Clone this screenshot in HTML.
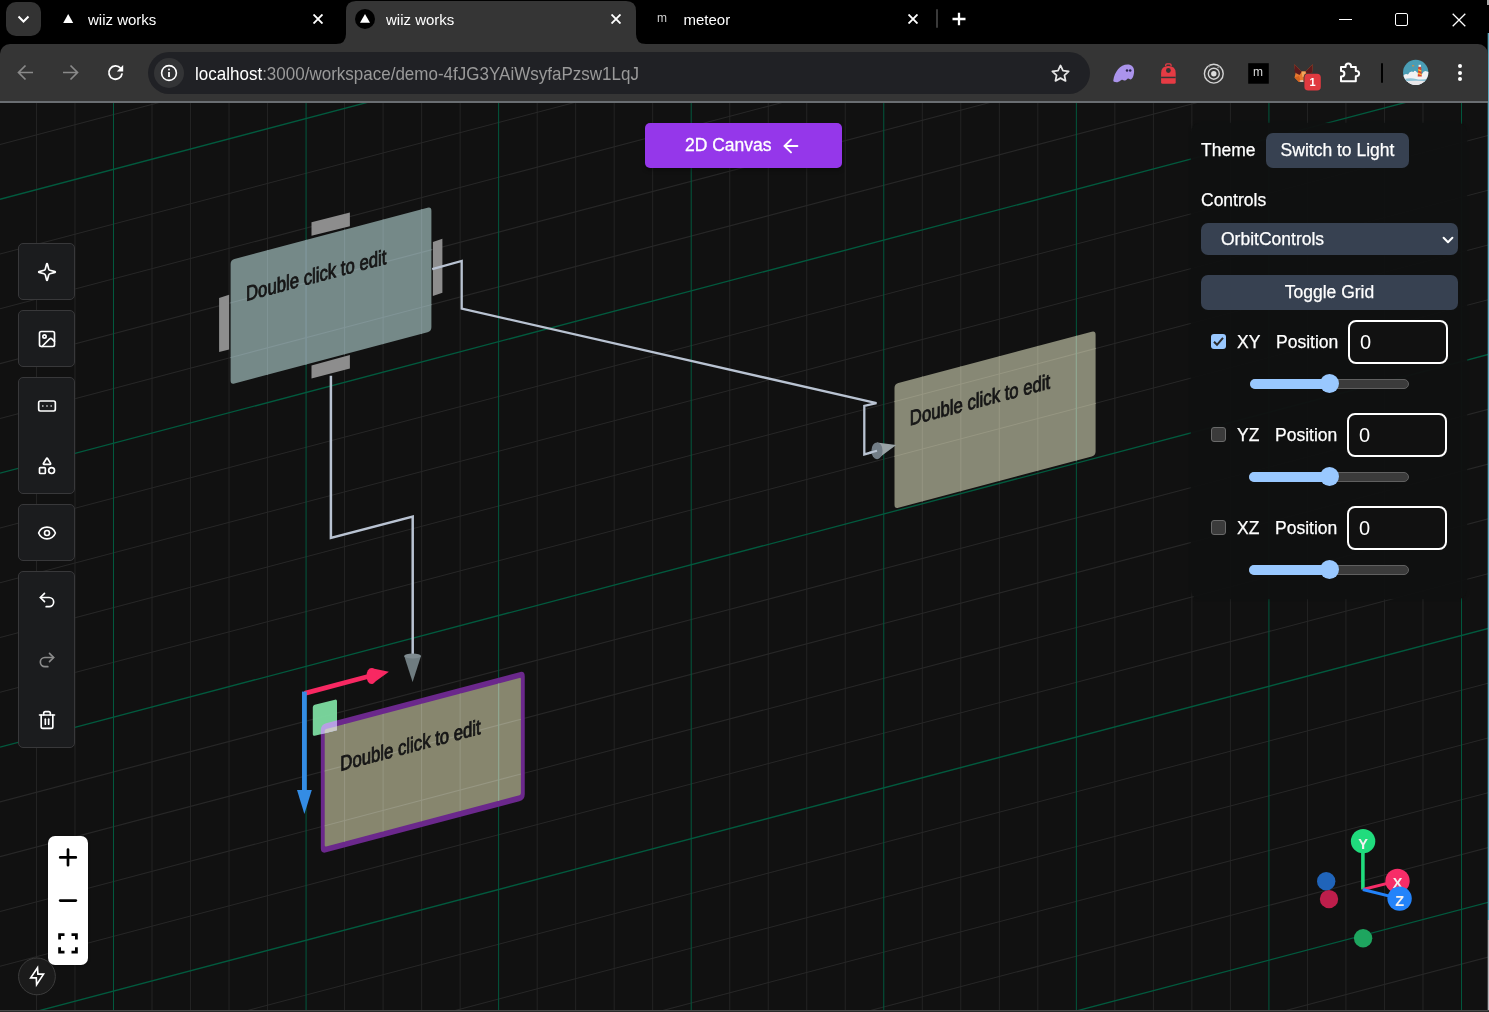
<!DOCTYPE html>
<html lang="en"><head><meta charset="utf-8"><title>wiiz works</title>
<style>
html,body{margin:0;padding:0}
body{width:1489px;height:1012px;background:#000;overflow:hidden;position:relative;font-family:"Liberation Sans",sans-serif}
#cv{position:absolute;left:0;top:103px;width:1488px;height:907px;background:#111;overflow:hidden;will-change:transform}
#ui{position:absolute;left:0;top:0;width:1489px;height:1012px;will-change:transform}
</style></head><body>
<div id="cv"><svg style="position:absolute;left:0;top:-103px" width="1489" height="1012" viewBox="0 0 1489 1012">
<path d="M36.47 103V1010M74.99 103V1010M152.01 103V1010M190.53 103V1010M229.04 103V1010M267.56 103V1010M344.58 103V1010M383.10 103V1010M421.61 103V1010M460.13 103V1010M537.15 103V1010M575.67 103V1010M614.18 103V1010M652.70 103V1010M729.72 103V1010M768.24 103V1010M806.75 103V1010M845.27 103V1010M922.29 103V1010M960.81 103V1010M999.32 103V1010M1037.84 103V1010M1114.86 103V1010M1153.38 103V1010M1191.89 103V1010M1230.41 103V1010M1307.43 103V1010M1345.95 103V1010M1384.46 103V1010M1422.98 103V1010" stroke="#242424" stroke-width="1" fill="none"/>
<path d="M0 144.52L1489 -248.28M0 254.08L1489 -138.72M0 308.86L1489 -83.94M0 363.64L1489 -29.16M0 418.42L1489 25.62M0 527.98L1489 135.18M0 582.76L1489 189.96M0 637.54L1489 244.74M0 692.32L1489 299.52M0 801.88L1489 409.08M0 856.66L1489 463.86M0 911.44L1489 518.64M0 966.22L1489 573.42M0 1075.78L1489 682.98M0 1130.56L1489 737.76M0 1185.34L1489 792.54M0 1240.12L1489 847.32M0 1349.68L1489 956.88M0 1404.46L1489 1011.66" stroke="#272727" stroke-width="1.050" fill="none"/>
<path d="M113.50 103V1010M306.07 103V1010M498.64 103V1010M691.21 103V1010M883.78 103V1010M1076.35 103V1010M1268.92 103V1010M1461.49 103V1010" stroke="#02593e" stroke-width="1" fill="none"/>
<path d="M0 199.30L1489 -193.50M0 473.20L1489 80.40M0 747.10L1489 354.30M0 1021.00L1489 628.20M0 1294.90L1489 902.10" stroke="#025a3e" stroke-width="1.350" fill="none"/>
<path d="M311.50 222.20L349.90 212.40L349.90 226.30L311.50 235.70Z" fill="#8d8d8d"/>
<path d="M219.10 297.90L229.10 294.80L229.10 349.40L219.10 351.90Z" fill="#8d8d8d"/>
<path d="M432.90 241.90L442.40 238.80L442.40 292.70L432.90 295.90Z" fill="#8d8d8d"/>
<path d="M234.47 258.88L427.53 207.71Q431.40 206.69 431.40 210.69L431.40 327.29Q431.40 331.29 427.53 332.31L234.47 383.48Q230.60 384.50 230.60 380.50L230.60 263.90Q230.60 259.90 234.47 258.88Z" fill="#758988"/>
<path d="M311.50 365.40L349.90 355.00L349.90 368.50L311.50 378.50Z" fill="#8d8d8d"/>
<path d="M898.37 382.98L1091.73 331.73Q1095.60 330.71 1095.60 334.71L1095.60 451.41Q1095.60 455.41 1091.73 456.43L898.37 507.68Q894.50 508.70 894.50 504.70L894.50 388.00Q894.50 384.00 898.37 382.98Z" fill="#878875"/>
<path d="M326.17 723.34L519.43 672.13Q524.75 670.72 524.75 676.22L524.75 794.22Q524.75 799.72 519.43 801.13L326.17 852.34Q320.85 853.75 320.85 848.25L320.85 730.25Q320.85 724.75 326.17 723.34Z" fill="#6b288c"/>
<path d="M326.15 729.12L519.45 677.89Q520.90 677.51 520.90 679.01L520.90 793.31Q520.90 794.81 519.45 795.19L326.15 846.42Q324.70 846.80 324.70 845.30L324.70 731.00Q324.70 729.50 326.15 729.12Z" fill="#87866e"/>
<clipPath id="c1"><path d="M234.47 258.88L427.53 207.71Q431.40 206.69 431.40 210.69L431.40 327.29Q431.40 331.29 427.53 332.31L234.47 383.48Q230.60 384.50 230.60 380.50L230.60 263.90Q230.60 259.90 234.47 258.88Z"/></clipPath>
<clipPath id="c2"><path d="M898.37 382.98L1091.73 331.73Q1095.60 330.71 1095.60 334.71L1095.60 451.41Q1095.60 455.41 1091.73 456.43L898.37 507.68Q894.50 508.70 894.50 504.70L894.50 388.00Q894.50 384.00 898.37 382.98ZM326.15 729.12L519.45 677.89Q520.90 677.51 520.90 679.01L520.90 793.31Q520.90 794.81 519.45 795.19L326.15 846.42Q324.70 846.80 324.70 845.30L324.70 731.00Q324.70 729.50 326.15 729.12Z"/></clipPath>
<g clip-path="url(#c1)"><path d="M36.47 103V1010M74.99 103V1010M152.01 103V1010M190.53 103V1010M229.04 103V1010M267.56 103V1010M344.58 103V1010M383.10 103V1010M421.61 103V1010M460.13 103V1010M537.15 103V1010M575.67 103V1010M614.18 103V1010M652.70 103V1010M729.72 103V1010M768.24 103V1010M806.75 103V1010M845.27 103V1010M922.29 103V1010M960.81 103V1010M999.32 103V1010M1037.84 103V1010M1114.86 103V1010M1153.38 103V1010M1191.89 103V1010M1230.41 103V1010M1307.43 103V1010M1345.95 103V1010M1384.46 103V1010M1422.98 103V1010" stroke="#809496" stroke-width="1" fill="none"/>
<path d="M0 144.52L1489 -248.28M0 254.08L1489 -138.72M0 308.86L1489 -83.94M0 363.64L1489 -29.16M0 418.42L1489 25.62M0 527.98L1489 135.18M0 582.76L1489 189.96M0 637.54L1489 244.74M0 692.32L1489 299.52M0 801.88L1489 409.08M0 856.66L1489 463.86M0 911.44L1489 518.64M0 966.22L1489 573.42M0 1075.78L1489 682.98M0 1130.56L1489 737.76M0 1185.34L1489 792.54M0 1240.12L1489 847.32M0 1349.68L1489 956.88M0 1404.46L1489 1011.66" stroke="#809496" stroke-width="1.1" fill="none"/>
<path d="M113.50 103V1010M306.07 103V1010M498.64 103V1010M691.21 103V1010M883.78 103V1010M1076.35 103V1010M1268.92 103V1010M1461.49 103V1010" stroke="#7d9498" stroke-width="1.7" fill="none"/>
<path d="M0 199.30L1489 -193.50M0 473.20L1489 80.40M0 747.10L1489 354.30M0 1021.00L1489 628.20M0 1294.90L1489 902.10" stroke="#7d9498" stroke-width="1.7" fill="none"/></g>
<g clip-path="url(#c2)"><path d="M36.47 103V1010M74.99 103V1010M152.01 103V1010M190.53 103V1010M229.04 103V1010M267.56 103V1010M344.58 103V1010M383.10 103V1010M421.61 103V1010M460.13 103V1010M537.15 103V1010M575.67 103V1010M614.18 103V1010M652.70 103V1010M729.72 103V1010M768.24 103V1010M806.75 103V1010M845.27 103V1010M922.29 103V1010M960.81 103V1010M999.32 103V1010M1037.84 103V1010M1114.86 103V1010M1153.38 103V1010M1191.89 103V1010M1230.41 103V1010M1307.43 103V1010M1345.95 103V1010M1384.46 103V1010M1422.98 103V1010" stroke="#969682" stroke-width="1" fill="none"/>
<path d="M0 144.52L1489 -248.28M0 254.08L1489 -138.72M0 308.86L1489 -83.94M0 363.64L1489 -29.16M0 418.42L1489 25.62M0 527.98L1489 135.18M0 582.76L1489 189.96M0 637.54L1489 244.74M0 692.32L1489 299.52M0 801.88L1489 409.08M0 856.66L1489 463.86M0 911.44L1489 518.64M0 966.22L1489 573.42M0 1075.78L1489 682.98M0 1130.56L1489 737.76M0 1185.34L1489 792.54M0 1240.12L1489 847.32M0 1349.68L1489 956.88M0 1404.46L1489 1011.66" stroke="#969682" stroke-width="1.1" fill="none"/>
<path d="M113.50 103V1010M306.07 103V1010M498.64 103V1010M691.21 103V1010M883.78 103V1010M1076.35 103V1010M1268.92 103V1010M1461.49 103V1010" stroke="#8fa58f" stroke-width="1.3" fill="none"/>
<path d="M0 199.30L1489 -193.50M0 473.20L1489 80.40M0 747.10L1489 354.30M0 1021.00L1489 628.20M0 1294.90L1489 902.10" stroke="#8fa58f" stroke-width="1.3" fill="none"/></g>
<text transform="matrix(0.8370 -0.2218 0 1.0470 246.00 300.90)" font-size="20" fill="#161616" stroke="#161616" stroke-width="0.85" font-family="Liberation Sans, sans-serif">Double click to edit</text>
<text transform="matrix(0.8370 -0.2218 0 1.0470 909.80 425.50)" font-size="20" fill="#161616" stroke="#161616" stroke-width="0.85" font-family="Liberation Sans, sans-serif">Double click to edit</text>
<text transform="matrix(0.8370 -0.2218 0 1.0470 340.30 771.00)" font-size="20" fill="#161616" stroke="#161616" stroke-width="0.85" font-family="Liberation Sans, sans-serif">Double click to edit</text>
<path d="M432.2 269.1L461.7 260.9V308.6L876.5 403.1L864.3 405.8V454.4L877 450.9" stroke="#b9c3d2" stroke-width="2.300" fill="none" stroke-linejoin="miter"/>
<path d="M330.9 375.8V537.9L412.7 516.5V656" stroke="#b9c3d2" stroke-width="2.500" fill="none"/>
<path d="M877 442.4L896.2 445L877 459.2Z" fill="#9aa3a6"/>
<ellipse cx="877" cy="450.8" rx="5.6" ry="8.4" fill="#727d86"/>
<path d="M868 453.2L877 450.8" stroke="#b9c3d2" stroke-width="2"/>
<path d="M404.2 656L412.6 682L421 656Z" fill="#6f7c80"/>
<ellipse cx="412.6" cy="656" rx="8.4" ry="2.6" fill="#7f8b90"/>
<path d="M304.6 693.4L369 676.3" stroke="#f82862" stroke-width="4.8"/>
<path d="M372 668.2L388.9 671.7L372 684Z" fill="#f82862"/><ellipse cx="371.5" cy="676" rx="5" ry="8" fill="#f82862"/>
<path d="M304.4 691.6V792" stroke="#348ce4" stroke-width="4.8"/>
<path d="M297 790L304.4 814L311.8 790Z" fill="#348ce4"/>
<path d="M312.8 707.2Q312.8 705.2 314.7 704.7L335 699.7Q337 699.2 337 701.2V728.2Q337 730.2 335 730.7L314.8 735.7Q312.8 736.2 312.8 734.2Z" fill="#7fe0a4" fill-opacity="0.93"/>
<clipPath id="gs"><path d="M312.8 705.2L337 699.2V730.2L312.8 736.2Z"/></clipPath>
<g clip-path="url(#gs)"><path d="M326.17 723.34L519.43 672.13Q524.75 670.72 524.75 676.22L524.75 794.22Q524.75 799.72 519.43 801.13L326.17 852.34Q320.85 853.75 320.85 848.25L320.85 730.25Q320.85 724.75 326.17 723.34Z" fill="#b79fe3"/><path d="M326.15 729.12L519.45 677.89Q520.90 677.51 520.90 679.01L520.90 793.31Q520.90 794.81 519.45 795.19L326.15 846.42Q324.70 846.80 324.70 845.30L324.70 731.00Q324.70 729.50 326.15 729.12Z" fill="#c9c9c4"/></g>
<circle cx="1326.2" cy="881.2" r="9.2" fill="#2064b9"/>
<circle cx="1329" cy="899.1" r="9.2" fill="#be1e4b"/>
<circle cx="1363.1" cy="938.3" r="9.2" fill="#1ea55f"/>
<path d="M1362.9 889.5V850" stroke="#20dc7d" stroke-width="3.600"/>
<path d="M1362.8 889.5L1397.5 880.9" stroke="#f72d68" stroke-width="3"/>
<circle cx="1397.5" cy="880.9" r="12.2" fill="#f72d68"/>
<text x="1397.5" y="888.2" font-size="14.500" font-weight="bold" fill="#f4f0f0" text-anchor="middle" font-family="Liberation Sans, sans-serif">X</text>
<path d="M1362.8 889.5L1399.6 898.6" stroke="#2383fa" stroke-width="3"/>
<circle cx="1399.6" cy="898.6" r="12.2" fill="#2383fa"/>
<text x="1399.6" y="905.9" font-size="14.500" font-weight="bold" fill="#f4f0f0" text-anchor="middle" font-family="Liberation Sans, sans-serif">Z</text>
<circle cx="1363.1" cy="841.2" r="12.2" fill="#20dc7d"/>
<text x="1363.1" y="848.6" font-size="14.500" font-weight="bold" fill="#f4f0f0" text-anchor="middle" font-family="Liberation Sans, sans-serif">Y</text>
</svg></div>
<div style="position:absolute;left:0;top:1010px;width:1489px;height:1px;background:#484848"></div>
<div style="position:absolute;left:0;top:1011px;width:1489px;height:1px;background:#2a2a2a"></div>
<div style="position:absolute;left:1488px;top:33px;width:1px;height:887px;background:#5ba8bd"></div><div style="position:absolute;left:1487px;top:0;width:2px;height:5px;background:#aaa"></div>
<div style="position:absolute;left:1488px;top:920px;width:1px;height:90px;background:#b4b4b9"></div>
<div style="position:absolute;left:1487px;top:33px;width:1px;height:887px;background:rgba(91,168,189,.3)"></div>
<div style="position:absolute;left:1487px;top:920px;width:1px;height:90px;background:rgba(180,180,185,.3)"></div>
<div id="ui">
<div style="position:absolute;left:0;top:44px;width:1488px;height:57px;background:#353535;border-radius:10px 10px 0 0"></div>
<div style="position:absolute;left:0;top:101px;width:1488px;height:2px;background:#6a6e72"></div>
<div style="position:absolute;left:6px;top:2px;width:35px;height:34px;border-radius:10px;background:#333"></div>
<svg style="position:absolute;left:17px;top:14px" width="13" height="10" viewBox="0 0 13 10" fill="none" stroke="#fff" stroke-width="2"><path d="M1.500 2.500l5 5 5-5"/></svg>
<svg style="position:absolute;left:336px;top:1px" width="310" height="43" viewBox="0 0 310 43"><path d="M0 43Q10 43 10 33V10Q10 0 20 0H290Q300 0 300 10V33Q300 43 310 43Z" fill="#353535"/></svg>
<svg style="position:absolute;left:63px;top:13.800px" width="11" height="10" viewBox="0 0 11 10"><path d="M5.200 0L10.200 9H0.200Z" fill="#fff"/></svg>
<div style="position:absolute;top:11px;color:#fff;font-size:15px;line-height:18px;white-space:nowrap;left:88px">wiiz works</div>
<div style="position:absolute;left:355px;top:9px;width:20px;height:20px;border-radius:50%;background:#000"></div>
<svg style="position:absolute;left:360px;top:14px" width="10" height="9" viewBox="0 0 10 9"><path d="M5 0L10 8.700H0Z" fill="#fff"/></svg>
<div style="position:absolute;top:11px;color:#fff;font-size:15px;line-height:18px;white-space:nowrap;left:386px">wiiz works</div>
<div style="position:absolute;left:657px;top:9px;color:#d0d0d0;font-size:12px;line-height:18px;font-weight:normal">m</div>
<div style="position:absolute;top:11px;color:#fff;font-size:15px;line-height:18px;white-space:nowrap;left:683.500px">meteor</div>
<svg style="position:absolute;left:313.0px;top:14px" width="10" height="10" viewBox="0 0 10 10" stroke="#fff" stroke-width="1.900" fill="none"><path d="M0.500 0.500l9 9M9.500 0.500l-9 9"/></svg>
<svg style="position:absolute;left:610.6px;top:14px" width="10" height="10" viewBox="0 0 10 10" stroke="#fff" stroke-width="1.900" fill="none"><path d="M0.500 0.500l9 9M9.500 0.500l-9 9"/></svg>
<svg style="position:absolute;left:908.0px;top:14px" width="10" height="10" viewBox="0 0 10 10" stroke="#fff" stroke-width="1.900" fill="none"><path d="M0.500 0.500l9 9M9.500 0.500l-9 9"/></svg>
<div style="position:absolute;left:936px;top:9px;width:2px;height:19px;background:#3a3a3a;border-radius:1px"></div>
<svg style="position:absolute;left:951.500px;top:12px" width="14" height="14" viewBox="0 0 14 14" stroke="#fff" stroke-width="2.300" fill="none"><path d="M7 0.700v12.600M0.500 7h13"/></svg>
<div style="position:absolute;left:1339px;top:19px;width:13px;height:1px;background:#fff"></div>
<div style="position:absolute;left:1395px;top:13px;width:13px;height:13px;box-sizing:border-box;border:1.300px solid #fff;border-radius:2px"></div>
<svg style="position:absolute;left:1452px;top:12.500px" width="14" height="14" viewBox="0 0 14 14" stroke="#fff" stroke-width="1.300" fill="none"><path d="M0.700 0.700l12.600 12.600M13.300 0.700l-12.600 12.600"/></svg>
<svg style="position:absolute;left:17px;top:64px" width="17" height="17" viewBox="0 0 17 17" stroke="#8a8a8a" stroke-width="1.700" fill="none"><path d="M16 8.500H2M8.500 1.500L1.500 8.500l7 7"/></svg>
<svg style="position:absolute;left:62px;top:64px" width="17" height="17" viewBox="0 0 17 17" stroke="#8a8a8a" stroke-width="1.700" fill="none"><path d="M1 8.500h14M8.500 1.500l7 7-7 7"/></svg>
<svg style="position:absolute;left:105px;top:62px" width="22" height="22" viewBox="105 62 22 22" stroke="#fff" stroke-width="1.800" fill="none"><path d="M120.640 68.280A6.650 6.650 0 1 0 122.140 73.480"/><path d="M123.200 65V71.400H116.800Z" fill="#fff" stroke="none"/></svg>
<div style="position:absolute;left:148px;top:52px;width:942px;height:42px;border-radius:21px;background:#202125"></div>
<div style="position:absolute;left:154px;top:58px;width:30px;height:30px;border-radius:50%;background:#333436"></div>
<svg style="position:absolute;left:160px;top:64px" width="18" height="18" viewBox="0 0 18 18" fill="none" stroke="#fff" stroke-width="1.600"><circle cx="9" cy="9" r="7.400"/><path d="M9 8v5" stroke-width="1.800"/><circle cx="9" cy="5.400" r="1" fill="#fff" stroke="none"/></svg>
<div id="url" style="position:absolute;left:195px;top:63px;font-size:19px;line-height:22px;white-space:nowrap;color:#9a9a9a;transform-origin:0 0;transform:scaleX(0.895)"><span style="color:#fff">localhost</span>:3000/workspace/demo-4fJG3YAiWsyfaPzsw1LqJ</div>
<svg style="position:absolute;left:1050px;top:63px" width="21" height="21" viewBox="0 0 24 24" fill="none" stroke="#e6e6e6" stroke-width="2" stroke-linejoin="round"><path d="M12 2.800l2.800 6 6.500.800-4.800 4.500 1.300 6.400L12 17.300l-5.800 3.200 1.300-6.400L2.700 9.600l6.500-.800z"/></svg>
<svg style="position:absolute;left:1100px;top:50px" width="280" height="50" viewBox="1100 50 280 50"><path d="M1113.3 80.600C1114.500 72 1120 64.600 1127.600 64.600C1131.500 64.600 1134.100 67.200 1134.100 71C1134.100 75.500 1132.300 79.400 1130.500 79.400C1129.600 79.400 1129.200 78.600 1128.300 78.600C1127 78.600 1126.600 80.600 1124.800 80.600C1123.600 80.600 1123.300 79.800 1122.300 79.800C1120.600 79.800 1119.600 82.300 1116.500 82.300C1114.500 82.300 1113.100 81.800 1113.300 80.600Z" fill="#ab94ec"/><circle cx="1127" cy="70.400" r="1.250" fill="#2e2752"/><circle cx="1130.200" cy="70.400" r="1.250" fill="#2e2752"/><path d="M1165.700 66V65.200Q1165.700 63.900 1167 63.900H1169.800Q1171.100 63.900 1171.100 65.200V66" stroke="#e63b44" stroke-width="1.300" fill="none"/><path d="M1161.100 73Q1161.100 66 1168.400 66Q1175.700 66 1175.700 73V82.300Q1175.700 83.800 1174.200 83.800H1162.600Q1161.100 83.800 1161.100 82.300Z" fill="#e63b44"/><rect x="1161.100" y="76.700" width="14.600" height="1.500" fill="#353535"/><circle cx="1168.400" cy="70.500" r="2.400" fill="#353535"/><circle cx="1213.800" cy="73.700" r="9.400" stroke="#d4d4d4" stroke-width="1.400" fill="none"/><circle cx="1213.800" cy="73.700" r="5.500" stroke="#d4d4d4" stroke-width="1.400" fill="none"/><circle cx="1213.800" cy="73.700" r="2.700" fill="#dcdcdc"/><path d="M1217.500 68l1.800-1.800M1208.600 65.600l1 1.300" stroke="#8a8a8a" stroke-width="1.600"/><rect x="1248.200" y="63.200" width="20.600" height="20.500" fill="#000"/><path d="M1294.200 64.300L1301.500 71.500H1305.700L1312.800 64.300L1312 73.500L1313 77L1308 82H1299L1294.500 77.500L1295.500 73.500Z" fill="#e8792e"/><path d="M1294.200 64.300L1301.800 71.800L1299.500 75L1294.800 72.600Z" fill="#5e1a1c"/><path d="M1312.800 64.300L1305.400 71.800L1307.600 75L1312.300 72.600Z" fill="#5e1a1c"/><path d="M1301.500 71.500H1305.700L1304.800 77H1302.400Z" fill="#f3a55b"/><path d="M1294.500 77.500L1299 76L1300.500 80.500L1299 82Z" fill="#d4631f"/><path d="M1299.500 80.500l3.500 -0.500l1 2h-3.500z" fill="#d9c7b8"/><rect x="1303.600" y="73" width="18" height="18.400" rx="4.500" fill="#353535"/><rect x="1304.400" y="73.800" width="16.400" height="16.800" rx="3.800" fill="#e03a40"/><path d="M1341 67H1345.600V66.300A2.700 2.700 0 0 1 1351 66.300V67H1355.800V71H1356.500A2.600 2.600 0 0 1 1356.500 76.200H1355.800V81.300H1341V76.500H1341.700A2.700 2.700 0 0 0 1341.700 71.100H1341Z" stroke="#fff" stroke-width="2" fill="none" stroke-linejoin="round"/></svg>
<div style="position:absolute;left:1253px;top:63px;color:#dcdcdc;font-size:12px;line-height:18px">m</div>
<div style="position:absolute;left:1304px;top:74px;width:17px;text-align:center;color:#fff;font-size:11px;font-weight:bold;line-height:17px">1</div>
<div style="position:absolute;left:1381px;top:63px;width:2px;height:19.500px;background:#000;border-radius:1px"></div>
<svg style="position:absolute;left:1403px;top:59px" width="26" height="27" viewBox="1403 59 26 27"><clipPath id="av"><circle cx="1415.700" cy="72.400" r="12.650"/></clipPath><g clip-path="url(#av)"><rect x="1403" y="59" width="26" height="27" fill="#4a9db5"/><path d="M1403 76Q1405 73 1408 74.500Q1410 70.500 1413.500 72Q1415 69.500 1417 72.500L1422 74Q1424 70 1427 71.500L1429 72V86H1403Z" fill="#f1f1f3"/><path d="M1403 79.500Q1410 77.500 1416 79Q1422 80.500 1429 78V82H1403Z" fill="#8fc3d6"/><path d="M1403 81.500Q1416 80 1429 81.500V86H1403Z" fill="#e9e6e8"/><path d="M1418.300 66.800H1421.200L1421.800 76.500H1417.700Z" fill="#d9432f"/><path d="M1418.200 69l3.100 1.200v1.500l-3.200-1.200zM1418 72.600l3.600 1.300v1.400l-3.700-1.300z" fill="#f0c23c"/><rect x="1418.600" y="64.800" width="2.300" height="2" fill="#f4f4f4"/><rect x="1412" y="65.300" width="2.200" height="1" fill="#f08a2e"/></g></svg>
<div style="position:absolute;left:1458.200px;top:63.6px;width:4px;height:4px;border-radius:50%;background:#fff"></div>
<div style="position:absolute;left:1458.200px;top:70.5px;width:4px;height:4px;border-radius:50%;background:#fff"></div>
<div style="position:absolute;left:1458.200px;top:77.3px;width:4px;height:4px;border-radius:50%;background:#fff"></div>
<div style="position:absolute;left:18px;width:57px;box-sizing:border-box;border:1px solid #38383a;border-radius:5px;background:#1b1c1e;top:243px;height:57px"></div>
<div style="position:absolute;left:18px;width:57px;box-sizing:border-box;border:1px solid #38383a;border-radius:5px;background:#1b1c1e;top:310px;height:57px"></div>
<div style="position:absolute;left:18px;width:57px;box-sizing:border-box;border:1px solid #38383a;border-radius:5px;background:#1b1c1e;top:377px;height:117px"></div>
<div style="position:absolute;left:18px;width:57px;box-sizing:border-box;border:1px solid #38383a;border-radius:5px;background:#1b1c1e;top:504px;height:57px"></div>
<div style="position:absolute;left:18px;width:57px;box-sizing:border-box;border:1px solid #38383a;border-radius:5px;background:#1b1c1e;top:571px;height:177px"></div>
<svg style="position:absolute;left:37.0px;top:262.0px" width="20" height="20" viewBox="0 0 24 24" fill="none" stroke="#fff" stroke-width="2" stroke-linecap="round" stroke-linejoin="round"><path d="M9.937 15.5A2 2 0 0 0 8.5 14.063l-6.135-1.582a.5.5 0 0 1 0-.962L8.5 9.936A2 2 0 0 0 9.937 8.5l1.582-6.135a.5.5 0 0 1 .963 0L14.063 8.5A2 2 0 0 0 15.5 9.937l6.135 1.581a.5.5 0 0 1 0 .964L15.5 14.063a2 2 0 0 0-1.437 1.437l-1.582 6.135a.5.5 0 0 1-.963 0z"/></svg>
<svg style="position:absolute;left:37.0px;top:329.0px" width="20" height="20" viewBox="0 0 24 24" fill="none" stroke="#fff" stroke-width="2" stroke-linecap="round" stroke-linejoin="round"><rect x="3" y="3" width="18" height="18" rx="2" ry="2"/><circle cx="9" cy="9" r="2"/><path d="m21 15-3.086-3.086a2 2 0 0 0-2.828 0L6 21"/></svg>
<svg style="position:absolute;left:37.0px;top:396.0px" width="20" height="20" viewBox="0 0 24 24" fill="none" stroke="#fff" stroke-width="2" stroke-linecap="round" stroke-linejoin="round"><rect x="2" y="6" width="20" height="12" rx="2"/><path d="M12 12h.01"/><path d="M17 12h.01"/><path d="M7 12h.01"/></svg>
<svg style="position:absolute;left:37.0px;top:456.0px" width="20" height="20" viewBox="0 0 24 24" fill="none" stroke="#fff" stroke-width="2" stroke-linecap="round" stroke-linejoin="round"><path d="M8.3 10a.7.7 0 0 1-.626-1.079L11.4 3a.7.7 0 0 1 1.198-.043L16.3 8.9a.7.7 0 0 1-.572 1.1Z"/><rect x="3" y="14" width="7" height="7" rx="1"/><circle cx="17.5" cy="17.5" r="3.5"/></svg>
<svg style="position:absolute;left:37.0px;top:523.0px" width="20" height="20" viewBox="0 0 24 24" fill="none" stroke="#fff" stroke-width="2" stroke-linecap="round" stroke-linejoin="round"><path d="M2.062 12.348a1 1 0 0 1 0-.696 10.75 10.75 0 0 1 19.876 0 1 1 0 0 1 0 .696 10.75 10.75 0 0 1-19.876 0"/><circle cx="12" cy="12" r="3"/></svg>
<svg style="position:absolute;left:37.0px;top:590.0px" width="20" height="20" viewBox="0 0 24 24" fill="none" stroke="#fff" stroke-width="2" stroke-linecap="round" stroke-linejoin="round"><path d="M9 14 4 9l5-5"/><path d="M4 9h10.500a5.500 5.500 0 0 1 5.500 5.500a5.500 5.500 0 0 1-5.500 5.500H11"/></svg>
<svg style="position:absolute;left:37.0px;top:650.0px" width="20" height="20" viewBox="0 0 24 24" fill="none" stroke="#8c8c8c" stroke-width="2" stroke-linecap="round" stroke-linejoin="round"><path d="m15 14 5-5-5-5"/><path d="M20 9H9.500A5.500 5.500 0 0 0 4 14.500A5.500 5.500 0 0 0 9.500 20H13"/></svg>
<svg style="position:absolute;left:37.0px;top:710.0px" width="20" height="20" viewBox="0 0 24 24" fill="none" stroke="#fff" stroke-width="2" stroke-linecap="round" stroke-linejoin="round"><path d="M3 6h18"/><path d="M19 6v14c0 1-1 2-2 2H7c-1 0-2-1-2-2V6"/><path d="M8 6V4c0-1 1-2 2-2h4c1 0 2 1 2 2v2"/><line x1="10" x2="10" y1="11" y2="17"/><line x1="14" x2="14" y1="11" y2="17"/></svg>
<svg style="position:absolute;left:16px;top:955px" width="42" height="42" viewBox="16 955 42 42" fill="none"><circle cx="36.950" cy="976.400" r="18.400" fill="#1b1b1b" stroke="#3c3c3c" stroke-width="1"/><path d="M37.500 967.700L30.700 977.800H36.300L36.600 984.600L43.500 974.100H37.900Z" stroke="#fff" stroke-width="1.650" stroke-linejoin="miter"/></svg>
<div style="position:absolute;left:48px;top:836px;width:40px;height:129px;background:#fff;border-radius:7px;box-shadow:0 1px 3px rgba(0,0,0,.3)"></div>
<svg style="position:absolute;left:48px;top:836px" width="40" height="129" viewBox="0 0 40 129" fill="none" stroke="#000" stroke-width="2.7" stroke-linecap="round" stroke-linejoin="round"><path d="M12.2 21.4h15.6M20 13.6v15.6"/><path d="M12.2 64.6h15.6"/><path d="M11.600 103.500v-4.900h4.900M23.500 98.600h4.900v4.900M28.400 111.200v4.900h-4.900M16.500 116.100h-4.900v-4.900" stroke-width="2.800" stroke-linecap="butt" stroke-linejoin="miter"/></svg>
<div style="position:absolute;left:645px;top:123px;width:197px;height:45px;background:#9537ea;border-radius:5px;box-shadow:0 2px 4px rgba(0,0,0,.4)"></div><div style="position:absolute;left:685px;top:135px;font-size:17.5px;line-height:20px;color:#fff;white-space:nowrap;-webkit-text-stroke:0.3px #fff">2D Canvas</div><svg style="position:absolute;left:780.3px;top:134.8px" width="22" height="22" viewBox="0 0 24 24" fill="none" stroke="#fff" stroke-width="2.1" stroke-linecap="round" stroke-linejoin="round"><path d="m12 19-7-7 7-7"/><path d="M19 12H5"/></svg>
<div style="position:absolute;left:1191px;top:123px;width:276px;height:476px;background:rgba(16,17,17,.97);border-radius:9px;box-shadow:0 0 3px rgba(16,17,17,.9)"></div>
<div style="position:absolute;color:#fff;font-size:17.5px;line-height:20px;white-space:nowrap;-webkit-text-stroke:0.25px #fff;left:1201px;top:140px">Theme</div>
<div style="position:absolute;left:1266px;top:133px;width:143px;height:35px;background:#374151;border-radius:7px"></div>
<div style="position:absolute;color:#fff;font-size:17.5px;line-height:20px;white-space:nowrap;-webkit-text-stroke:0.25px #fff;left:1266px;top:140px;width:143px;text-align:center">Switch to Light</div>
<div style="position:absolute;color:#fff;font-size:17.5px;line-height:20px;white-space:nowrap;-webkit-text-stroke:0.25px #fff;left:1201px;top:190px">Controls</div>
<div style="position:absolute;left:1201px;top:223px;width:257px;height:32px;background:#374151;border-radius:7px"></div>
<div style="position:absolute;color:#fff;font-size:17.5px;line-height:20px;white-space:nowrap;-webkit-text-stroke:0.25px #fff;left:1221px;top:229px">OrbitControls</div>
<svg style="position:absolute;left:1441px;top:234px" width="14" height="12" viewBox="0 0 14 12" fill="none" stroke="#fff" stroke-width="2" stroke-linecap="round" stroke-linejoin="round"><path d="M2.600 3.800l4.400 4.400 4.400-4.400"/></svg>
<div style="position:absolute;left:1201px;top:275px;width:257px;height:35px;background:#374151;border-radius:7px"></div>
<div style="position:absolute;color:#fff;font-size:17.5px;line-height:20px;white-space:nowrap;-webkit-text-stroke:0.25px #fff;left:1201px;top:282px;width:257px;text-align:center">Toggle Grid</div>
<div style="position:absolute;left:1211px;top:334px;width:15px;height:15px;border-radius:3px;background:#99c8ff"></div>
<svg style="position:absolute;left:1211px;top:334px" width="15" height="15" viewBox="0 0 15 15" fill="none" stroke="#2b2b2b" stroke-width="2" stroke-linecap="butt"><path d="M3 7.800l3 3 6-7"/></svg>
<div style="position:absolute;color:#fff;font-size:17.5px;line-height:20px;white-space:nowrap;-webkit-text-stroke:0.25px #fff;left:1237px;top:332px">XY</div>
<div style="position:absolute;color:#fff;font-size:17.5px;line-height:20px;white-space:nowrap;-webkit-text-stroke:0.25px #fff;left:1276px;top:332px">Position</div>
<div style="position:absolute;left:1348px;top:320px;width:100px;height:44px;box-sizing:border-box;border:2px solid #fff;border-radius:8px;background:#111"></div>
<div style="position:absolute;left:1360px;top:330px;color:#fff;font-size:20px;line-height:24px">0</div>
<div style="position:absolute;left:1250px;top:379px;width:159px;height:10px;box-sizing:border-box;border-radius:5px;background:#3b3b3b;border:1px solid #606060"></div>
<div style="position:absolute;left:1250px;top:379px;width:79px;height:10px;border-radius:5px 0 0 5px;background:#99c8ff"></div>
<div style="position:absolute;left:1320.0px;top:374px;width:19px;height:19px;border-radius:50%;background:#99c8ff"></div>
<div style="position:absolute;left:1211px;top:427px;width:15px;height:15px;box-sizing:border-box;border-radius:3px;background:#3b3b3b;border:1px solid #6a6a6a"></div>
<div style="position:absolute;color:#fff;font-size:17.5px;line-height:20px;white-space:nowrap;-webkit-text-stroke:0.25px #fff;left:1237px;top:425px">YZ</div>
<div style="position:absolute;color:#fff;font-size:17.5px;line-height:20px;white-space:nowrap;-webkit-text-stroke:0.25px #fff;left:1275px;top:425px">Position</div>
<div style="position:absolute;left:1347px;top:413px;width:100px;height:44px;box-sizing:border-box;border:2px solid #fff;border-radius:8px;background:#111"></div>
<div style="position:absolute;left:1359px;top:423px;color:#fff;font-size:20px;line-height:24px">0</div>
<div style="position:absolute;left:1249px;top:472px;width:160px;height:10px;box-sizing:border-box;border-radius:5px;background:#3b3b3b;border:1px solid #606060"></div>
<div style="position:absolute;left:1249px;top:472px;width:80px;height:10px;border-radius:5px 0 0 5px;background:#99c8ff"></div>
<div style="position:absolute;left:1319.5px;top:467px;width:19px;height:19px;border-radius:50%;background:#99c8ff"></div>
<div style="position:absolute;left:1211px;top:520px;width:15px;height:15px;box-sizing:border-box;border-radius:3px;background:#3b3b3b;border:1px solid #6a6a6a"></div>
<div style="position:absolute;color:#fff;font-size:17.5px;line-height:20px;white-space:nowrap;-webkit-text-stroke:0.25px #fff;left:1237px;top:518px">XZ</div>
<div style="position:absolute;color:#fff;font-size:17.5px;line-height:20px;white-space:nowrap;-webkit-text-stroke:0.25px #fff;left:1275px;top:518px">Position</div>
<div style="position:absolute;left:1347px;top:506px;width:100px;height:44px;box-sizing:border-box;border:2px solid #fff;border-radius:8px;background:#111"></div>
<div style="position:absolute;left:1359px;top:516px;color:#fff;font-size:20px;line-height:24px">0</div>
<div style="position:absolute;left:1249px;top:565px;width:160px;height:10px;box-sizing:border-box;border-radius:5px;background:#3b3b3b;border:1px solid #606060"></div>
<div style="position:absolute;left:1249px;top:565px;width:80px;height:10px;border-radius:5px 0 0 5px;background:#99c8ff"></div>
<div style="position:absolute;left:1319.5px;top:560px;width:19px;height:19px;border-radius:50%;background:#99c8ff"></div>
</div>
</body></html>
